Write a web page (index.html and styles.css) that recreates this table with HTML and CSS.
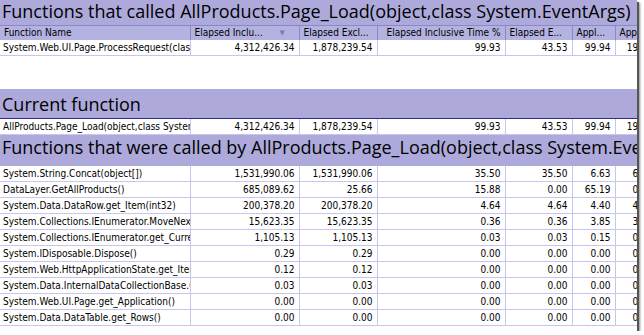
FILE: index.html
```html
<!DOCTYPE html>
<html>
<head>
<meta charset="utf-8">
<link rel="stylesheet" href="styles.css">
</head>
<body>
<div class="frame">
  <div class="band band-top">Functions that called AllProducts.Page_Load(object,class System.EventArgs)</div>
  <div class="section section-callers">
    <table class="grid">
      <colgroup>
        <col class="c-name"><col class="c-incl"><col class="c-excl"><col class="c-pct"><col class="c-exclp"><col class="c-appl"><col class="c-appl2">
      </colgroup>
      <thead>
        <tr>
          <th class="left">Function Name</th>
          <th class="sorted">Elapsed Inclu...<span class="sort-arrow">&#9660;</span></th>
          <th>Elapsed Excl...</th>
          <th class="right">Elapsed Inclusive Time %</th>
          <th>Elapsed E...</th>
          <th>Appl...</th>
          <th>Appl...</th>
        </tr>
      </thead>
      <tbody>
        <tr><td class="name">System.Web.UI.Page.ProcessRequest(class System.Web.HttpContext)</td><td>4,312,426.34</td><td>1,878,239.54</td><td>99.93</td><td>43.53</td><td>99.94</td><td>19.98</td></tr>
      </tbody>
    </table>
  </div>
  <div class="band band-current">Current function</div>
  <table class="grid">
    <colgroup>
      <col class="c-name"><col class="c-incl"><col class="c-excl"><col class="c-pct"><col class="c-exclp"><col class="c-appl"><col class="c-appl2">
    </colgroup>
    <tbody>
      <tr><td class="name current-name">AllProducts.Page_Load(object,class System.EventArgs)</td><td>4,312,426.34</td><td>1,878,239.54</td><td>99.93</td><td>43.53</td><td>99.94</td><td>19.98</td></tr>
    </tbody>
  </table>
  <div class="band band-callees">Functions that were called by AllProducts.Page_Load(object,class System.EventArgs)</div>
  <table class="grid callees">
    <colgroup>
      <col class="c-name"><col class="c-incl"><col class="c-excl"><col class="c-pct"><col class="c-exclp"><col class="c-appl"><col class="c-appl2">
    </colgroup>
    <tbody>
      <tr><td class="name">System.String.Concat(object[])</td><td>1,531,990.06</td><td>1,531,990.06</td><td>35.50</td><td>35.50</td><td>6.63</td><td>6.63</td></tr>
      <tr><td class="name">DataLayer.GetAllProducts()</td><td>685,089.62</td><td>25.66</td><td>15.88</td><td>0.00</td><td>65.19</td><td>0.00</td></tr>
      <tr><td class="name">System.Data.DataRow.get_Item(int32)</td><td>200,378.20</td><td>200,378.20</td><td>4.64</td><td>4.64</td><td>4.40</td><td>4.40</td></tr>
      <tr><td class="name">System.Collections.IEnumerator.MoveNext()</td><td>15,623.35</td><td>15,623.35</td><td>0.36</td><td>0.36</td><td>3.85</td><td>3.85</td></tr>
      <tr><td class="name">System.Collections.IEnumerator.get_Current()</td><td>1,105.13</td><td>1,105.13</td><td>0.03</td><td>0.03</td><td>0.15</td><td>0.15</td></tr>
      <tr><td class="name">System.IDisposable.Dispose()</td><td>0.29</td><td>0.29</td><td>0.00</td><td>0.00</td><td>0.00</td><td>0.00</td></tr>
      <tr><td class="name">System.Web.HttpApplicationState.get_Item(string)</td><td>0.12</td><td>0.12</td><td>0.00</td><td>0.00</td><td>0.00</td><td>0.00</td></tr>
      <tr><td class="name">System.Data.InternalDataCollectionBase.GetEnumerator()</td><td>0.03</td><td>0.03</td><td>0.00</td><td>0.00</td><td>0.00</td><td>0.00</td></tr>
      <tr><td class="name">System.Web.UI.Page.get_Application()</td><td>0.00</td><td>0.00</td><td>0.00</td><td>0.00</td><td>0.00</td><td>0.00</td></tr>
      <tr><td class="name">System.Data.DataTable.get_Rows()</td><td>0.00</td><td>0.00</td><td>0.00</td><td>0.00</td><td>0.00</td><td>0.00</td></tr>
    </tbody>
  </table>
</div>
</body>
</html>
```

FILE: styles.css
```css
html, body {
  margin: 0;
  padding: 0;
  background: #ffffff;
}

.frame {
  width: 637px;
  height: 331px;
  overflow: hidden;
  background: #ffffff;
  box-shadow: 2px 2px 0 #555555, 3px 3px 2px rgba(0, 0, 0, 0.45);
}

.band {
  background: #adaadb;
  color: #000000;
  font-family: "Open Sans", "DejaVu Sans", sans-serif;
  font-size: 18px;
  white-space: nowrap;
  overflow: hidden;
  padding-left: 2px;
  box-sizing: border-box;
}

.band-top {
  height: 25px;
  line-height: 23px;
}

.band-current {
  height: 30px;
  line-height: 30px;
  border-bottom: 1px solid #2f2d7a;
}

.band-callees {
  height: 31px;
  line-height: 24px;
}

.section-callers {
  height: 64px;
}

.grid {
  table-layout: fixed;
  border-collapse: collapse;
  width: 657px;
  font-family: "DejaVu Sans Condensed", "DejaVu Sans", sans-serif;
  font-size: 10px;
  color: #000000;
}

.c-name { width: 190px; }
.c-incl { width: 109px; }
.c-excl { width: 78px; }
.c-pct { width: 128px; }
.c-exclp { width: 67px; }
.c-appl { width: 43px; }
.c-appl2 { width: 42px; }

.grid th {
  background: #b4b2e0;
  border-top: 1px solid #8a88c8;
  border-left: 1px solid #8a88c8;
  height: 14px;
  padding: 0 4px;
  font-weight: normal;
  text-align: left;
  white-space: nowrap;
  overflow: hidden;
  line-height: 14px;
}

.grid th:first-child {
  border-left: none;
}

.grid th.right {
  text-align: right;
}

.grid th.sorted {
  position: relative;
}

.sort-arrow {
  position: absolute;
  right: 14px;
  top: 0;
  font-size: 7px;
  color: #7a78c0;
}

.grid td {
  height: 15px;
  padding: 0 4px 0 4px;
  border: 1px solid #c8c6ee;
  border-top: none;
  text-align: right;
  white-space: nowrap;
  overflow: hidden;
  line-height: 15px;
}

.grid td:first-child {
  border-left: none;
}

.grid td.name {
  text-align: left;
  padding-left: 3px;
  text-overflow: clip;
}
```
